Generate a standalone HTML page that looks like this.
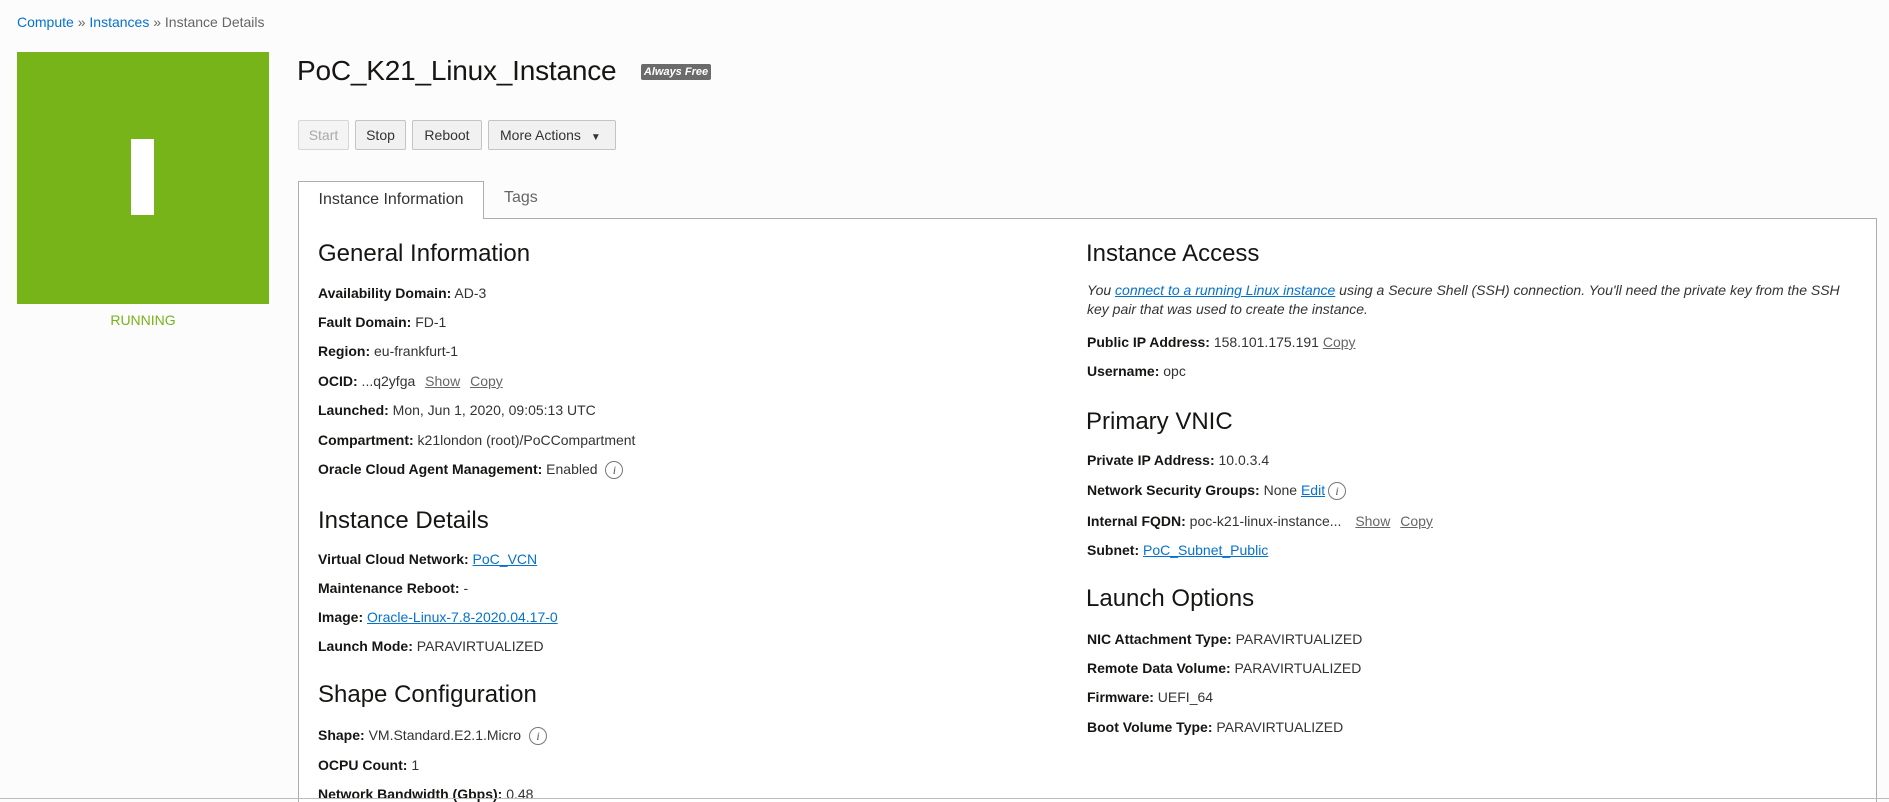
<!DOCTYPE html>
<html><head><meta charset="utf-8"><style>
*{margin:0;padding:0;box-sizing:border-box}
html,body{width:1889px;height:802px;overflow:hidden}
body{background:#fcfcfc;font-family:"Liberation Sans",Arial,sans-serif;color:#333;position:relative}
.a{position:absolute;white-space:nowrap}
a,.lk{color:#0572ce}
.u{text-decoration:underline}
.bc{left:17px;top:14px;font-size:14px;color:#666}
.bc span{color:#0572ce}
.green{left:17px;top:52px;width:252px;height:252px;background:#76b41a}
.bar{left:131px;top:139px;width:23px;height:76px;background:#fff}
.run{left:17px;width:252px;text-align:center;top:312px;font-size:14px;color:#76b41a}
.title{left:297px;top:55px;font-size:28px;color:#161513;letter-spacing:-0.2px}
.badge{left:641px;top:64px;width:70px;height:16px;background:#6b6b6b;color:#fff;font-size:11px;font-weight:bold;font-style:italic;text-align:center;line-height:16px;border-radius:2px}
.btn{top:120px;height:30px;border:1px solid #c4c4c4;background:#f1f1f1;border-radius:2px;font-size:14px;line-height:28px;text-align:center;color:#333}
.panel{left:298px;top:218px;width:1579px;height:584px;border:1px solid #adadad;border-bottom:none;background:#fff}
.tab{left:298px;top:181px;width:186px;height:38px;border:1px solid #adadad;border-bottom:none;background:#fff;font-size:16px;color:#333;line-height:36px;text-align:center;z-index:2}
.tags{left:504px;top:189px;font-size:16px;color:#666}
h2{position:absolute;font-weight:normal;font-size:24px;color:#161513;white-space:nowrap}
.r{position:absolute;font-size:14px;white-space:nowrap;color:#333}
.r b{color:#161513}
.g{color:#666;text-decoration:underline;margin-left:6px}
.i{display:inline-block;width:18px;height:18px;border:1px solid #777;border-radius:50%;font-size:12px;font-style:italic;text-align:center;line-height:16px;color:#555;vertical-align:middle;margin-left:4px;font-family:"Liberation Serif",serif}
.line{left:0;top:798px;width:1889px;height:1px;background:#bbb}
</style></head><body>
<div class="a bc"><span>Compute</span> » <span>Instances</span> » Instance Details</div>
<div class="a green"></div><div class="a bar"></div>
<div class="a run">RUNNING</div>
<div class="a title">PoC_K21_Linux_Instance</div>
<div class="a badge">Always Free</div>
<div class="a btn" style="left:298px;width:51px;color:#aaa;background:#f4f4f4;border-color:#d6d6d6">Start</div>
<div class="a btn" style="left:355px;width:51px">Stop</div>
<div class="a btn" style="left:412px;width:70px">Reboot</div>
<div class="a btn" style="left:488px;width:128px;text-align:left;padding-left:11px">More Actions <span style="font-size:10px;margin-left:6px">▼</span></div>
<div class="a panel"></div>
<div class="a tab">Instance Information</div>
<div class="a tags">Tags</div>

<h2 style="left:318px;top:240px">General Information</h2>
<div class="r" style="left:318px;top:285px"><b>Availability Domain:</b> AD-3</div>
<div class="r" style="left:318px;top:314px"><b>Fault Domain:</b> FD-1</div>
<div class="r" style="left:318px;top:343px"><b>Region:</b> eu-frankfurt-1</div>
<div class="r" style="left:318px;top:373px"><b>OCID:</b> ...q2yfga <span class="g">Show</span> <span class="g">Copy</span></div>
<div class="r" style="left:318px;top:402px"><b>Launched:</b> Mon, Jun 1, 2020, 09:05:13 UTC</div>
<div class="r" style="left:318px;top:432px"><b>Compartment:</b> k21london (root)/PoCCompartment</div>
<div class="r" style="left:318px;top:461px"><b>Oracle Cloud Agent Management:</b> Enabled <span class="i">i</span></div>

<h2 style="left:318px;top:507px">Instance Details</h2>
<div class="r" style="left:318px;top:551px"><b>Virtual Cloud Network:</b> <span class="lk u">PoC_VCN</span></div>
<div class="r" style="left:318px;top:580px"><b>Maintenance Reboot:</b> -</div>
<div class="r" style="left:318px;top:609px"><b>Image:</b> <span class="lk u">Oracle-Linux-7.8-2020.04.17-0</span></div>
<div class="r" style="left:318px;top:638px"><b>Launch Mode:</b> PARAVIRTUALIZED</div>

<h2 style="left:318px;top:681px">Shape Configuration</h2>
<div class="r" style="left:318px;top:727px"><b>Shape:</b> VM.Standard.E2.1.Micro <span class="i">i</span></div>
<div class="r" style="left:318px;top:757px"><b>OCPU Count:</b> 1</div>
<div class="r" style="left:318px;top:786px"><b>Network Bandwidth (Gbps):</b> 0.48</div>

<h2 style="left:1086px;top:240px">Instance Access</h2>
<div class="r" style="left:1087px;top:281px;font-style:italic;line-height:19px;white-space:normal;width:770px">You <span class="lk u">connect to a running Linux instance</span> using a Secure Shell (SSH) connection. You'll need the private key from the SSH key pair that was used to create the instance.</div>
<div class="r" style="left:1087px;top:334px"><b>Public IP Address:</b> 158.101.175.191 <span class="g" style="margin-left:0">Copy</span></div>
<div class="r" style="left:1087px;top:363px"><b>Username:</b> opc</div>

<h2 style="left:1086px;top:408px">Primary VNIC</h2>
<div class="r" style="left:1087px;top:452px"><b>Private IP Address:</b> 10.0.3.4</div>
<div class="r" style="left:1087px;top:482px"><b>Network Security Groups:</b> None <span class="lk u">Edit</span><span class="i" style="margin-left:3px">i</span></div>
<div class="r" style="left:1087px;top:513px"><b>Internal FQDN:</b> poc-k21-linux-instance... <span class="g" style="margin-left:10px">Show</span> <span class="g">Copy</span></div>
<div class="r" style="left:1087px;top:542px"><b>Subnet:</b> <span class="lk u">PoC_Subnet_Public</span></div>

<h2 style="left:1086px;top:585px">Launch Options</h2>
<div class="r" style="left:1087px;top:631px"><b>NIC Attachment Type:</b> PARAVIRTUALIZED</div>
<div class="r" style="left:1087px;top:660px"><b>Remote Data Volume:</b> PARAVIRTUALIZED</div>
<div class="r" style="left:1087px;top:689px"><b>Firmware:</b> UEFI_64</div>
<div class="r" style="left:1087px;top:719px"><b>Boot Volume Type:</b> PARAVIRTUALIZED</div>
<div class="a line"></div>
</body></html>
